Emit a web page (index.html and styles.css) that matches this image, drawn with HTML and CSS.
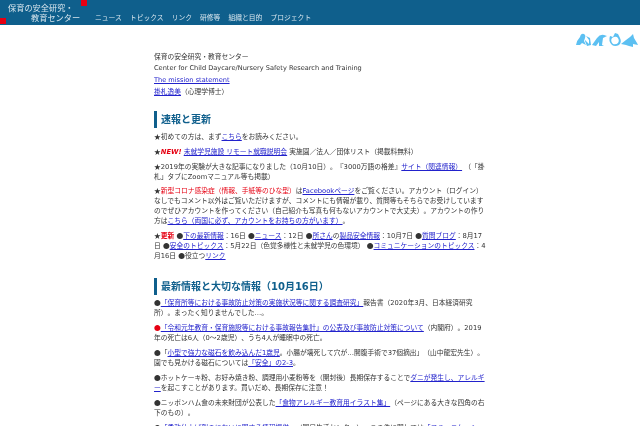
FILE: index.html
```html
<!DOCTYPE html>
<html lang="ja">
<head>
<meta charset="utf-8">
<title>保育の安全研究・教育センター</title>
<link rel="stylesheet" href="styles.css">
</head>
<body>
<header class="topbar">
  <div class="logo">
    <span class="logo-line">保育の安全研究・</span>
    <span class="logo-line logo-line-2">教育センター</span>
    <i class="sq sq-a"></i>
    <i class="sq sq-b"></i>
  </div>
  <nav class="nav">
    <a>ニュース</a><a>トピックス</a><a>リンク</a><a>研修等</a><a>組織と目的</a><a>プロジェクト</a>
  </nav>
</header>
<svg class="birds" width="64" height="16" viewBox="0 0 64 16" fill="#5cc0f2">
  <path d="M1 13 Q2 8 5 5 Q6 1 9 2 Q11 3 10 6 L9 9 L11 13 L7 11 L5 13 Z"/>
  <path d="M11 4 L15 6 L16 13 L12 14 L10 9 L10 8 L12 10 L14 12 L14 8 Z"/>
  <path d="M17 13 L22 6 Q25 2 29 3 L32 4 L28 6 L27 13 L29 14 L24 14 L24 10 L21 14 Z"/>
  <path fill-rule="evenodd" d="M35 4 L38 5 L40 1 L43 2 L45 6 Q47 10 44 13 Q40 15 37 13 Q33 9 35 4 Z M37 6 Q35 9 38 12 Q41 13 43 11 Q45 8 42 5 Q40 4 37 6 Z"/>
  <path d="M46 12 L51 8 L55 5 L58 2 L59 6 L62 11 L63 13 L58 12 L58 15 L54 14 L51 13 Z"/>
</svg>
<main class="content">
  <p class="intro">保育の安全研究・教育センター</p>
  <p class="intro latin">Center for Child Daycare/Nursery Safety Research and Training</p>
  <p class="intro latin"><a href="#">The mission statement</a></p>
  <p class="intro"><a href="#">掛札逸美</a>（心理学博士）</p>

  <h2>速報と更新</h2>
  <p><i class="mk">★</i>初めての方は、まず<a href="#">こちら</a>をお読みください。</p>
  <p><i class="mk">★</i><b class="new">NEW!</b> <a href="#">未就学児施設 リモート就職説明会</a> 実施園／法人／団体リスト（掲載料無料）</p>
  <p><i class="mk">★</i>2019年の実験が大きな記事になりました（10月10日）。『3000万語の格差』<a href="#">サイト（関連情報）</a> （「掛札」タブにZoomマニュアル等も掲載）</p>
  <p><i class="mk">★</i><span class="red">新型コロナ感染症（情報、手紙等のひな型）</span>は<a href="#">Facebookページ</a>をご覧ください。アカウント（ログイン）なしでもコメント以外はご覧いただけますが、コメントにも情報が載り、質問等もそちらでお受けしていますのでぜひアカウントを作ってください（自己紹介も写真も何もないアカウントで大丈夫）。アカウントの作り方は<a href="#">こちら（両国に必ず、アカウントをお持ちの方がいます）</a>。</p>
  <p><i class="mk">★</i><b class="red">更新</b> <i class="mk">●</i><a href="#">下の最新情報</a>：16日 <i class="mk">●</i><a href="#">ニュース</a>：12日 <i class="mk">●</i><a href="#">所さん</a>の<a href="#">製品安全情報</a>：10月7日 <i class="mk">●</i><a href="#">質問ブログ</a>：8月17日 <i class="mk">●</i><a href="#">安全のトピックス</a>：5月22日（色覚多様性と未就学児の色環境） <i class="mk">●</i><a href="#">コミュニケーションのトピックス</a>：4月16日 <i class="mk">●</i>役立つ<a href="#">リンク</a></p>

  <h2 class="second">最新情報と大切な情報（10月16日）</h2>
  <p><i class="mk">●</i><a href="#">「保育所等における事故防止対策の実施状況等に関する調査研究」</a>報告書（2020年3月、日本経済研究所）。まったく知りませんでした…。</p>
  <p><i class="mk red">●</i><a href="#">「令和元年教育・保育施設等における事故報告集計」の公表及び事故防止対策について</a>（内閣府）。2019年の死亡は6人（0～2歳児）、うち4人が睡眠中の死亡。</p>
  <p><i class="mk">●</i>「<a href="#">小型で強力な磁石を飲み込んだ1歳児</a>。小腸が壊死して穴が…開腹手術で37個摘出」（山中龍宏先生）。園でも見かける磁石については<a href="#">「安全」の2-3</a>。</p>
  <p><i class="mk">●</i>ホットケーキ粉、お好み焼き粉、調理用小麦粉等を（開封後）長期保存することで<a href="#">ダニが発生し、アレルギー</a>を起こすことがあります。買いだめ、長期保存に注意！</p>
  <p><i class="mk">●</i>ニッポンハム食の未来財団が公表した<a href="#">「食物アレルギー教育用イラスト集」</a>（ページにある大きな四角の右下のもの）。</p>
  <p><i class="mk">●</i><a href="#">「柔軟仕上げ剤のにおいに関する情報提供」</a>（国民生活センター）。この件に関しては<a href="#">「コミュニケーション</a></p>
</main>
</body>
</html>
```
FILE: styles.css
```css
html, body { margin: 0; padding: 0; height: 426px; overflow: hidden; background: #fff; }
body { font-family: "DejaVu Sans", "Noto Sans CJK JP", sans-serif; color: #333; position: relative; text-spacing-trim: space-all; }
.topbar { height: 25px; background: #0f5f8c; display: flex; align-items: stretch; color: #d8e6ee; filter: blur(0.25px); }
.logo { width: 95px; flex: none; position: relative; display: flex; flex-direction: column; font-size: 8.2px; line-height: 9.5px; padding-top: 4px; box-sizing: border-box; }
.logo-line { padding-left: 8px; }
.logo-line-2 { padding-left: 31px; }
.sq { position: absolute; background: #e60012; width: 6px; height: 6px; }
.sq-a { left: 81px; top: 0; }
.sq-b { left: 0; top: 18px; }
.nav { display: flex; gap: 8px; align-items: center; font-size: 6.8px; padding-top: 8px; box-sizing: border-box; }
.birds { position: absolute; left: 575px; top: 32px; filter: blur(0.25px); }
.content { width: 333px; margin-left: 154px; padding-top: 26.5px; font-size: 6.75px; line-height: 10px; filter: blur(0.25px); }
.content a { color: #2222cc; text-decoration: underline; }
.content p { margin: 0 0 4.7px; }
.content p.intro { margin: 0; line-height: 11.7px; }
.content p.latin { font-size: 6.6px; }
.content h2.second ~ p { margin-bottom: 5px; }
.mk { font-family: "Noto Sans CJK JP", sans-serif; font-style: normal; line-height: 0; }
h2 { margin: 13px 0 4px; padding-left: 4px; border-left: 3px solid #0f5f8c; height: 17px; line-height: 17px; font-size: 10px; font-weight: 700; color: #0f5f8c; }
h2.second { margin: 16.5px 0 3.5px; }
.red { color: #e60012; }
.new { color: #e60012; font-style: italic; }
```
